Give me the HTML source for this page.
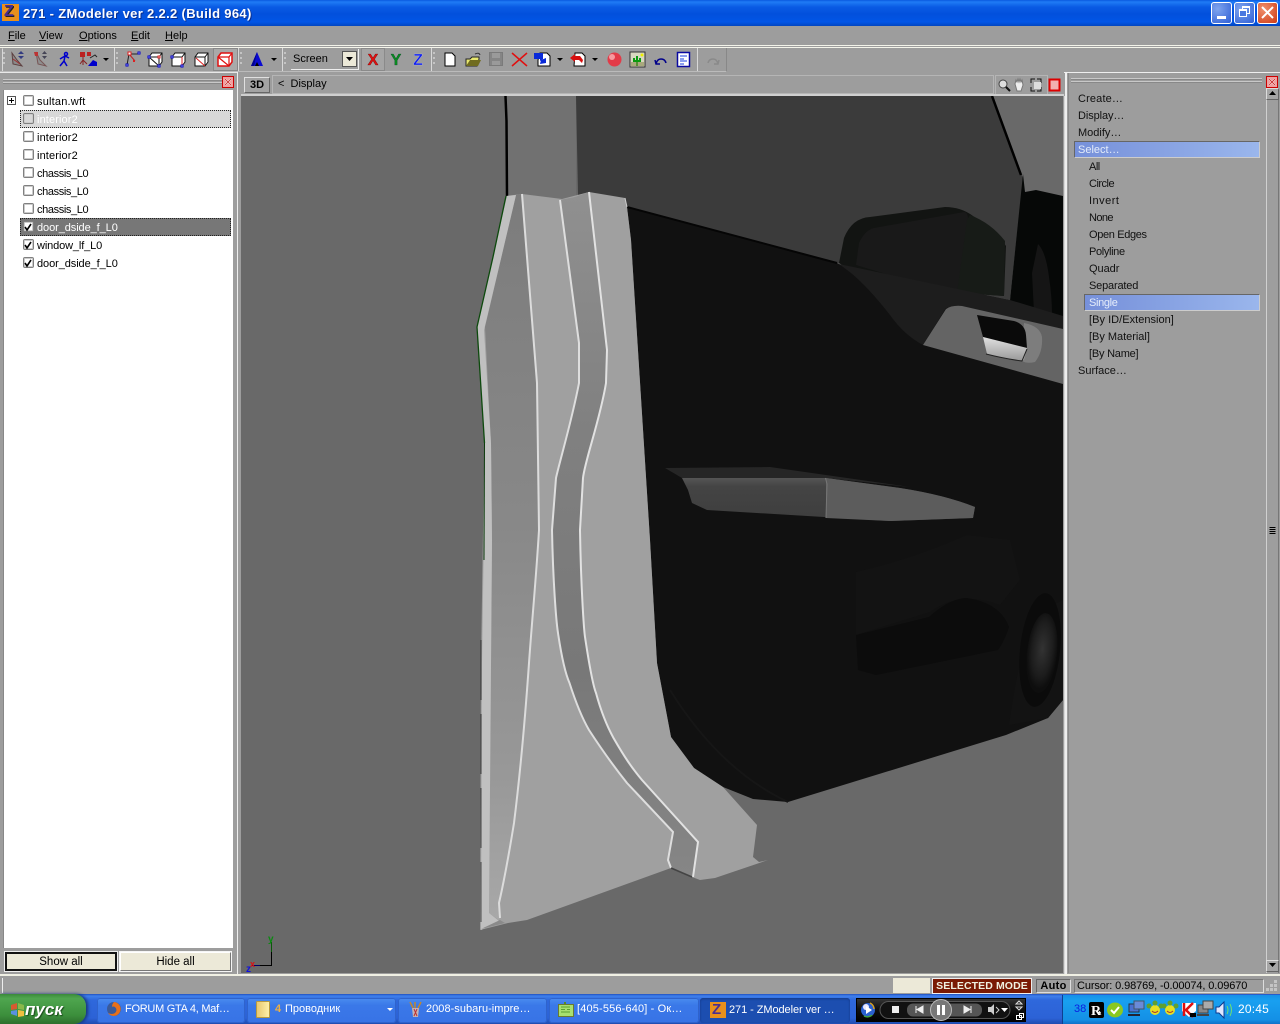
<!DOCTYPE html>
<html><head><meta charset="utf-8"><title>271 - ZModeler ver 2.2.2 (Build 964)</title>
<style>
html,body{margin:0;padding:0;background:#9d9d9d;}
#s{position:relative;width:1280px;height:1024px;overflow:hidden;background:#9d9d9d;font:11px "Liberation Sans","Noto Sans CJK SC",sans-serif;color:#000;}
#s div,#s span.a{position:absolute;}
.t{white-space:nowrap;line-height:13px;}
.row{left:37px;}
.cb{left:23px;width:9px;height:9px;border:1px solid #808080;border-radius:2px;background:#fff;box-shadow:inset 0 0 0 1px #ccc;}
.m{white-space:nowrap;line-height:13px;color:#111;}
.task{top:998px;height:25px;background:linear-gradient(#4a8cf0,#3a78e8 30%,#3873e6);border-radius:3px;color:#fff;line-height:23px;white-space:nowrap;box-shadow:inset 0 0 0 1px #2f63cc;}
u{text-decoration:underline;}
</style></head><body><div id="s">

<!-- title bar -->
<div style="left:0;top:0;width:1280px;height:26px;background:linear-gradient(#0a5ae0 0,#1f7bf5 2px,#0a5be4 7px,#0250dc 14px,#0155e6 22px,#0145c0 26px);"></div>
<div style="left:2px;top:4px;width:17px;height:17px;background:#e8901c;"></div>
<div style="left:4px;top:2px;font:bold 16px 'Liberation Sans',sans-serif;color:#4b2f90;text-shadow:1px 1px 0 #222;line-height:20px;">Z</div>
<div class="t" style="left:23px;top:6px;font:bold 13px 'Liberation Sans',sans-serif;color:#fff;letter-spacing:.33px;line-height:15px;text-shadow:1px 1px 0 #0a2f90;">271 - ZModeler ver 2.2.2 (Build 964)</div>
<div style="left:1211px;top:2px;width:19px;height:20px;border:1px solid #fff;border-radius:3px;background:radial-gradient(circle at 30% 30%,#7ea4ee,#2f5fd6);"></div>
<div style="left:1217px;top:16px;width:9px;height:3px;background:#fff;"></div>
<div style="left:1234px;top:2px;width:19px;height:20px;border:1px solid #fff;border-radius:3px;background:radial-gradient(circle at 30% 30%,#7ea4ee,#2f5fd6);"></div>
<div style="left:1242px;top:6px;width:6px;height:5px;border:1px solid #fff;border-top-width:2px;"></div>
<div style="left:1239px;top:9px;width:6px;height:5px;border:1px solid #fff;border-top-width:2px;background:#4a78e0;"></div>
<div style="left:1257px;top:2px;width:19px;height:20px;border:1px solid #fff;border-radius:3px;background:radial-gradient(circle at 30% 30%,#f0906c,#cf3a14);"></div>
<svg style="position:absolute;left:1257px;top:2px" width="21" height="22"><path d="M5 5L16 16M16 5L5 16" stroke="#fff" stroke-width="2"/></svg>

<!-- menu -->
<div class="t" style="left:8px;top:30px;"><u>F</u>ile</div>
<div class="t" style="left:39px;top:30px;"><u>V</u>iew</div>
<div class="t" style="left:79px;top:30px;"><u>O</u>ptions</div>
<div class="t" style="left:131px;top:30px;"><u>E</u>dit</div>
<div class="t" style="left:165px;top:30px;"><u>H</u>elp</div>
<div style="left:0;top:45px;width:1280px;height:1px;background:#f4f4ea;"></div>
<div style="left:0;top:47px;width:1280px;height:1px;background:#f4f4ea;"></div>

<!-- combo on toolbar -->
<div style="left:291px;top:49px;width:67px;height:20px;background:#9d9d9d;border-bottom:1px solid #eee;border-right:1px solid #eee;"></div>
<div class="t" style="left:293px;top:53px;">Screen</div>
<div style="left:342px;top:51px;width:15px;height:16px;background:#ece9d8;border:1px solid #555;box-sizing:border-box;"></div>

<!-- toolbar and icon layer -->
<svg style="position:absolute;left:0;top:0" width="1280" height="100" viewBox="0 0 1280 100">
<g stroke="#d8d8d8" fill="none">
<path d="M2.500 48.500V71M114.500 48V71M238.500 48V71M282.500 48V71M431.500 48V71M697.500 48V71"/>
<path d="M726.500 48V71" stroke="#888"/>
<path d="M0 71.500H726" stroke="#bbb"/>
</g>
<g fill="#c4c4c4">
<rect x="3" y="52" width="2" height="2"/><rect x="3" y="57" width="2" height="2"/><rect x="3" y="62" width="2" height="2"/>
<rect x="116" y="52" width="2" height="2"/><rect x="116" y="57" width="2" height="2"/><rect x="116" y="62" width="2" height="2"/>
<rect x="240" y="52" width="2" height="2"/><rect x="240" y="57" width="2" height="2"/><rect x="240" y="62" width="2" height="2"/>
<rect x="284" y="52" width="2" height="2"/><rect x="284" y="57" width="2" height="2"/><rect x="284" y="62" width="2" height="2"/>
<rect x="433" y="52" width="2" height="2"/><rect x="433" y="57" width="2" height="2"/><rect x="433" y="62" width="2" height="2"/>
</g>
<rect x="213.500" y="48.500" width="24" height="22" fill="#a9a9a9" stroke="#888"/>
<rect x="361.500" y="48.500" width="23" height="22" fill="#a5a5a5" stroke="#8a8a8a"/>
<path d="M12 53l5 7 5 6-9-2z" fill="#8a8a8a" stroke="#5d4040"/><path d="M13 59l7 5" stroke="#a03030"/><path d="M18 54h6l-3-3zM18 56h6l-3 3z" fill="#333b80"/>
<path d="M36 52l4 8 6 6-8-2z" fill="#8f8f8f" stroke="#755"/><path d="M34 52h4v4h-3z" fill="#b33"/><path d="M42 54h5l-2.500-3zM42 56h5l-2.500 3z" fill="#445"/>
<g stroke="#00c" fill="none" stroke-width="1.500"><circle cx="66" cy="54" r="1.500"/><path d="M65 56l-1 5-4 5M64 61l3 5M60 59l5-3 4 2"/></g>
<g fill="#b22"><rect x="80" y="52" width="5" height="5"/><rect x="87" y="52" width="4" height="4"/></g><path d="M83 57v8M83 60l-3 4M83 60l4 4" stroke="#822" fill="none"/><path d="M88 66l5-6 4 2v4z" fill="#00c"/><path d="M90 58l5-3 2 2" stroke="#222" fill="none"/>
<path d="M103 58h6l-3 3z" fill="#000"/>
<path d="M127 65l2-11h9" stroke="#222" fill="none"/><path d="M129 54l6 7" stroke="#b22"/>
<g fill="#fff" stroke="#00c"><rect x="126" y="64" width="2" height="2"/><rect x="138" y="52" width="2" height="2"/></g><rect x="128" y="52" width="3" height="3" fill="#fff" stroke="#d22"/><rect x="133" y="60" width="2" height="2" fill="#d22"/>
<path d="M149 57l3-4h10v9l-3 4h-10z" fill="#fff" stroke="#111"/><path d="M149 57h10v9M159 57l3-4M149 57l10 9" stroke="#111" fill="none"/>
<g fill="#fff" stroke="#00c"><rect x="148" y="56" width="2" height="2"/><rect x="158" y="65" width="2" height="2"/></g><rect x="158" y="56" width="2" height="2" fill="#fff" stroke="#d22"/>
<path d="M172 57l3-4h10v9l-3 4h-10z" fill="#fff" stroke="#111"/><path d="M172 57h10v9M182 57l3-4" stroke="#111" fill="none"/><path d="M182 57v9" stroke="#d22"/><g fill="#fff" stroke="#00c"><rect x="171" y="56" width="2" height="2"/><rect x="181" y="65" width="2" height="2"/></g>
<path d="M195 57l3-4h10v9l-3 4h-10z" fill="#fff" stroke="#111"/><path d="M195 57h10v9M205 57l3-4" stroke="#111" fill="none"/><path d="M196 58l9 8" stroke="#d22"/>
<path d="M218 57l3-4h11v9l-3 4h-11z" fill="#fff" stroke="#e01010" stroke-width="1.500"/><path d="M218 57h11v9M229 57l3-4M218 57l11 9" stroke="#e01010" fill="none" stroke-width="1.200"/>
<path d="M257 52l6 14h-12z" fill="#0a0ad0"/><path d="M257 52l-3 14h-3z" fill="#000090"/><path d="M257 62l2 4h-4z" fill="#000"/>
<path d="M271 58h6l-3 3z" fill="#000"/>
<path d="M346 57h7l-3.500 4z" fill="#000"/>
<text x="373" y="65" text-anchor="middle" font-family="Liberation Sans" font-weight="bold" font-size="16" fill="#e01010" stroke="#600" stroke-width=".3">X</text>
<text x="396" y="65" text-anchor="middle" font-family="Liberation Sans" font-weight="bold" font-size="16" fill="#0a8a20" stroke="#042" stroke-width=".3">Y</text>
<text x="418" y="65" text-anchor="middle" font-family="Liberation Sans" font-weight="bold" font-size="16" fill="#1020f0" stroke="#ccd" stroke-width=".3">Z</text>
<path d="M445 53h7l3 3v10h-10z" fill="#fff" stroke="#000"/>
<path d="M466 59h4l2-2h7v2l-2 7h-11z" fill="#e8e870" stroke="#222"/><path d="M466 66l4-6h11l-3 6z" fill="#706c20"/><path d="M475 54q4-2 5 1" stroke="#333" fill="none"/>
<rect x="489.500" y="52.500" width="13" height="13" fill="#858585" stroke="#7a7a7a"/><rect x="492" y="53" width="8" height="5" fill="#9a9a9a"/><rect x="492" y="61" width="8" height="4" fill="#9a9a9a"/>
<path d="M512 53l15 13M527 53l-15 13" stroke="#e01010" stroke-width="1.500"/>
<path d="M540 53h7l3 3v10h-12v-6z" fill="#fff" stroke="#000"/><path d="M534 53h9v6l-3 2v-2h-6z" fill="#0a2ad8"/><path d="M541 60l5-2v5l-6 1z" fill="#0a2ad8"/>
<path d="M557 58h6l-3 3z" fill="#000"/>
<path d="M575 53h7l3 3v10h-11z" fill="#fff" stroke="#000"/><path d="M570 58l5-4v2h5l3 4-1 3-3-3h-4v2z" fill="#d80f0f"/>
<path d="M592 58h6l-3 3z" fill="#000"/>
<circle cx="614.500" cy="59.500" r="7" fill="#e23b48"/><circle cx="612" cy="57" r="3" fill="#f79aa0"/>
<rect x="630" y="52" width="15" height="15" fill="#d8d8c0" stroke="#333"/><path d="M637 66v-10M634 58v3h6v-3" stroke="#0a9a10" stroke-width="2" fill="none"/><rect x="631" y="62" width="13" height="4" fill="#8a8a50" opacity=".6"/><circle cx="642" cy="55" r="1.500" fill="#ee0"/>
<path d="M655 60l1 4h4M656 64q1-5 5-5 4 0 5 4" stroke="#00008a" stroke-width="1.500" fill="none"/>
<rect x="677.500" y="52.500" width="12" height="14" fill="#fff" stroke="#0a0aa0" stroke-width="1.500"/><path d="M680 56h7M680 59h4M680 61h7M680 64h4" stroke="#1a40e0"/>
<path d="M719 60l-1 4h-4M718 64q-1-5-5-5-4 0-5 4" stroke="#8a8a8a" stroke-width="1.500" fill="none"/>
<path d="M3 79.500H222M3 82.500H222" stroke="#c8c8c8"/><path d="M3 80.500H222M3 83.500H222" stroke="#888"/>
<rect x="222.500" y="76.500" width="11" height="11" fill="#f0a0a0" stroke="#c00"/><path d="M225 79l6 6M231 79l-6 6" stroke="#fff" stroke-width="1.500"/><path d="M225 79l6 6M231 79l-6 6" stroke="#b00" stroke-width=".7"/>
<path d="M1071 78.500H1262M1071 81.500H1262" stroke="#c8c8c8"/><path d="M1071 79.500H1262M1071 82.500H1262" stroke="#888"/>
<rect x="1266.500" y="76.500" width="11" height="11" fill="#f0a0a0" stroke="#c00"/><path d="M1269 79l6 6M1275 79l-6 6" stroke="#fff" stroke-width="1.500"/><path d="M1269 79l6 6M1275 79l-6 6" stroke="#b00" stroke-width=".7"/>
<circle cx="1003" cy="84" r="4" fill="#ddd" stroke="#444"/><path d="M1006 87l4 4" stroke="#111" stroke-width="2"/>
<path d="M1015 84l1-4 1 2 1-3 1 3 1-3 1 3 1-2 1 5-2 6h-4z" fill="#eee" stroke="#777"/>
<path d="M1031 83v-4h4M1037 79h4v4M1041 87v4h-4M1035 91h-4v-4" stroke="#111" fill="none"/><rect x="1034" y="82" width="7" height="7" fill="#ddd"/>
<rect x="1049.500" y="79.500" width="10" height="11" fill="#f2b0b0" stroke="#d00" stroke-width="2"/>
<rect x="995.500" y="75.500" width="52" height="19" fill="none" stroke="#b5b5b5"/>
</svg>

<!-- left panel -->
<div style="left:237px;top:72px;width:1px;height:903px;background:#eee;"></div>
<div style="left:0;top:72px;width:237px;height:1px;background:#e8e8e8;"></div>
<div style="left:3px;top:90px;width:230px;height:858px;background:#fff;border-left:1px solid #888;box-sizing:border-box;"></div>
<div style="left:7px;top:96px;width:9px;height:9px;border:1px solid #555;box-sizing:border-box;background:#fff;"></div>
<div style="left:9px;top:100px;width:5px;height:1px;background:#000;"></div>
<div style="left:11px;top:98px;width:1px;height:5px;background:#000;"></div>
<div style="left:20px;top:110px;width:209px;height:16px;background:#d8d8d8;border:1px dotted #222;"></div>
<div style="left:20px;top:218px;width:209px;height:16px;background:#777;border:1px dotted #222;"></div>
<div class="cb" style="top:95px"></div><div class="t row" style="top:95px;letter-spacing:.2px;top:96px">sultan.wft</div>
<div class="cb" style="top:113px;background:#d8d8d8"></div><div class="t row" style="top:114px;color:#fff;letter-spacing:.12px">interior2</div>
<div class="cb" style="top:131px"></div><div class="t row" style="top:132px;letter-spacing:.12px">interior2</div>
<div class="cb" style="top:149px"></div><div class="t row" style="top:150px;letter-spacing:.12px">interior2</div>
<div class="cb" style="top:167px"></div><div class="t row" style="top:168px;letter-spacing:-.38px">chassis_L0</div>
<div class="cb" style="top:185px"></div><div class="t row" style="top:186px;letter-spacing:-.38px">chassis_L0</div>
<div class="cb" style="top:203px"></div><div class="t row" style="top:204px;letter-spacing:-.38px">chassis_L0</div>
<div class="cb" style="top:221px"></div><div class="t row" style="top:222px;color:#fff;letter-spacing:-.08px">door_dside_f_L0</div>
<div class="cb" style="top:239px"></div><div class="t row" style="top:240px;letter-spacing:-.13px">window_lf_L0</div>
<div class="cb" style="top:257px"></div><div class="t row" style="top:258px;letter-spacing:-.08px">door_dside_f_L0</div>
<svg style="position:absolute;left:0;top:0" width="40" height="280"><g stroke="#000" stroke-width="1.600" fill="none"><path d="M25 227l2 3 4-6M25 245l2 3 4-6M25 263l2 3 4-6"/></g></svg>
<div style="left:5px;top:952px;width:112px;height:19px;box-sizing:border-box;background:#ece9d8;border:2px solid #111;text-align:center;line-height:16px;font-size:11.500px;box-shadow:0 0 0 1px #eee;">Show all</div>
<div style="left:120px;top:952px;width:111px;height:19px;box-sizing:border-box;background:#ece9d8;border:1px solid #fff;border-right-color:#777;border-bottom-color:#777;text-align:center;line-height:18px;font-size:11.500px;box-shadow:0 0 0 1px #f5f5f5;">Hide all</div>

<!-- viewport header -->
<div style="left:244px;top:77px;width:26px;height:16px;box-sizing:border-box;background:#a3a3a3;border:1px solid #e0e0e0;border-right-color:#666;border-bottom-color:#666;font:bold 11px 'Liberation Sans',sans-serif;text-align:center;line-height:14px;">3D</div>
<div style="left:272px;top:75px;width:722px;height:19px;box-sizing:border-box;border:1px solid #b5b5b5;"></div>
<div class="t" style="left:278px;top:78px;">&lt;&nbsp;&nbsp;Display</div>
<div style="left:241px;top:94px;width:823px;height:2px;background:#cfcfcf;"></div>

<!-- 3D viewport -->
<svg style="position:absolute;left:241px;top:96px" width="822" height="877" viewBox="241 96 822 877">
<defs>
<linearGradient id="band" x1="0" y1="0" x2="0" y2="1"><stop offset="0" stop-color="#7c7c7c"/><stop offset=".45" stop-color="#888"/><stop offset=".8" stop-color="#989898"/><stop offset="1" stop-color="#a8a8a8"/></linearGradient>
<linearGradient id="gr" x1="0" y1="0" x2="0" y2="1"><stop offset="0" stop-color="#909090"/><stop offset=".35" stop-color="#808080"/><stop offset=".7" stop-color="#787878"/><stop offset="1" stop-color="#868686"/></linearGradient>
<linearGradient id="arm" x1="0" y1="0" x2="0" y2="1"><stop offset="0" stop-color="#555"/><stop offset=".2" stop-color="#444"/><stop offset="1" stop-color="#3e3e3e"/></linearGradient>
<linearGradient id="lip" x1="0" y1="0" x2="0" y2="1"><stop offset="0" stop-color="#e0e0e0"/><stop offset="1" stop-color="#9a9a9a"/></linearGradient>
<radialGradient id="spk" cx=".5" cy=".45" r=".5"><stop offset="0" stop-color="#333"/><stop offset=".7" stop-color="#1c1c1c"/><stop offset="1" stop-color="#0e0e0e"/></radialGradient>
</defs>
<rect x="241" y="96" width="822" height="877" fill="#696969"/>
<path d="M506 96H576V200L506 200z" fill="#717171"/>
<path d="M576 96H992L1023 178 1010 300 837 263 627 207 578 195z" fill="#3b3b3b"/>
<path d="M992 96L1021 175" stroke="#000" stroke-width="2.500"/>
<path d="M505.500 96l1 25 .5 75" stroke="#000" stroke-width="2.500" fill="none"/>
<path d="M1023 174l2 18 11-2 27 6V325L1009 310z" fill="#060807"/>
<path d="M1038 244q8 8 11 33 3 20 3 37l-10 2-8-3-2-40z" fill="#151515"/>
<path d="M839 263l5-25q8-20 26-21l75-10q16 0 28 9 24 16 33 30l-2 50-50-4L853 272z" fill="#121412"/>
<path d="M856 265l3-22q6-13 15-15l90-16q4 0 4 8l-9 76z" fill="#191919"/>
<path d="M967 220l-10 73 47 3 1-55q-14-18-35-26z" fill="#171b17"/>
<path d="M627 207L837 263 853 272 1063 325V700L1048 718 1006 735 788 802 753 799 723 787 694 768 671 737 657 663 650 540 631 240z" fill="#111"/>
<path d="M627 207L837 263" stroke="#050505" stroke-width="2"/>
<path d="M839 264L1010 300 1063 316V330L960 306 946 308 923 345Q904 335 890 315 868 287 851 273z" fill="#1d1d1d"/>
<path d="M923 345L946 309Q952 305 962 306L1063 329V384z" fill="#646464"/>
<path d="M1024 323q16 3 18 14 1 15-7 25-8 2-13-1z" fill="#7d7d7d"/>
<path d="M977 315L1014 321Q1025 324 1026 335L1027 348 983 337z" fill="#0a0a0a"/>
<path d="M983 337L1027 348 1024 360Q1014 362 987 354z" fill="url(#lip)"/>
<path d="M986 354q20 5 36 7l5-12" stroke="#222" fill="none"/>
<!-- armrest -->
<path d="M665 468L770 467 910 487 826 478H682z" fill="#262626"/>
<path d="M682 478H826L900 488Q945 495 975 507L973 518 891 521 707 510 692 503 688 490z" fill="url(#arm)"/>
<path d="M826 478L900 488Q945 495 975 507L973 518 891 521 826 518z" fill="#5c5c5c"/>
<path d="M825.500 478l1.500 6-1 34" stroke="#777" fill="none"/>
<!-- lower door -->
<path d="M856 572Q910 560 967 535L1010 540 1020 580 1000 605Q960 590 930 612L856 635z" fill="#131313"/>
<path d="M856 635L929 617Q950 598 967 598 1000 603 1009 627 1005 640 998 650L876 675 858 670z" fill="#0c0c0c"/>
<path d="M1009 725Q1018 660 1033 615L1063 600V700L1048 718z" fill="#131313"/>
<ellipse cx="1040" cy="650" rx="20" ry="57" transform="rotate(6 1040 650)" fill="#0b0b0b"/>
<ellipse cx="1042" cy="653" rx="15" ry="40" transform="rotate(6 1042 653)" fill="url(#spk)"/>
<path d="M670 690Q720 770 788 802" stroke="#161616" stroke-width="2" fill="none"/>
<!-- sill strip -->
<path d="M506 196L522 194 562 199 589 192 625 198 627 207 631 240 650 540 657 663 671 737 694 768 723 787 757 825 753 857 759 862 768 860 715 878 700 880 692 877 671 868 527 920 508 923 480 930 481 663 483 530 484.500 443 480 373 477 327 493 257z" fill="#a0a0a0"/>
<path d="M516 195L485 327 491 443 492 540 489 913 499 920 500 915 499 903C502 890 508 860 514 823 520 775 525 720 529 663 532 620 536 580 539 530L537 383 522 194z" fill="url(#band)"/>
<path d="M507 196L516 195 490 305 484 330 491 443 492 540 489 913 499 921 481 930 482 663 484 530 485 443 480 373 477 327 493 257z" fill="#c0c0c0"/>
<path d="M506 196L493 257 477 327 480 373 484.500 443" stroke="#0d4a0d" stroke-width="1.300" fill="none"/>
<path d="M484.500 443L484 560" stroke="#0d3a0d" fill="none"/>
<path d="M481 640V930" stroke="#1a1a1a" stroke-dasharray="60 14" stroke-width=".7" fill="none"/>
<path d="M481 929L500 920 505 923z" fill="#8a8a8a"/>
<path d="M522 194L537 383 539 530C536 580 532 620 529 663 525 720 520 775 514 823 508 860 502 890 499 903L500 918" stroke="#dcdcdc" stroke-width="2" fill="none"/>
<!-- groove -->
<path d="M560 200L579 343 579 383C572 420 560 460 556 478L552 530C553 580 556 620 558 633 562 660 566 675 569.500 683 575 700 582 718 589 730 602 750 615 768 627 783L673 832 668 860 671 868 693 877 698 842 642 780C632 768 625 758 613.500 738 608 728 602 715 596 693 594 688 590 670 585 637 584 630 581 590 580 530L583 478C585 460 600 420 606 383L607 350 589 192 575 197z" fill="url(#gr)"/>
<path d="M560 200L579 343 579 383C572 420 560 460 556 478L552 530C553 580 556 620 558 633 562 660 566 675 569.500 683 575 700 582 718 589 730 602 750 615 768 627 783L673 832 668 860 671 868" stroke="#dedede" stroke-width="2" fill="none"/>
<path d="M589 192L607 350 606 383C600 420 585 460 583 478L580 530C581 590 584 630 585 637 590 670 594 688 596 693 602 715 608 728 613.500 738 625 758 632 768 642 780L698 842 693 877" stroke="#e2e2e2" stroke-width="2" fill="none"/>
<path d="M671 868L692 877" stroke="#444" stroke-width="1.500"/>
<path d="M625 198L627 207" stroke="#ccc"/>
<!-- axes -->
<path d="M271.500 942V965.500H252" stroke="#000" fill="none"/>
<path d="M271.500 942V952" stroke="#0a5a0a" fill="none"/>
<path d="M252 965.500h8" stroke="#000066"/>
<text x="268" y="942" font-family="Liberation Sans" font-weight="bold" font-size="10" fill="#0a8a10">y</text>
<text x="250" y="967" font-family="Liberation Sans" font-weight="bold" font-size="9" fill="#e01010">x</text>
<text x="246" y="972" font-family="Liberation Sans" font-weight="bold" font-size="10" fill="#1010e0">z</text>
</svg>

<!-- right side -->
<div style="left:1064px;top:96px;width:1px;height:878px;background:#d8d8d8;"></div>
<div style="left:1064px;top:72px;width:216px;height:1px;background:#eee;"></div>
<div style="left:1065px;top:73px;width:2px;height:902px;background:#eee;"></div>
<div style="left:1068px;top:73px;width:1px;height:900px;background:#888;"></div>
<div style="left:1266px;top:89px;width:13px;height:884px;box-sizing:border-box;border-left:1px solid #d0d0d0;border-right:1px solid #777;background:#9e9e9e;"></div>
<div style="left:1266px;top:88px;width:13px;height:12px;box-sizing:border-box;background:#a6a6a6;border:1px solid #ddd;border-right-color:#666;border-bottom-color:#666;"></div>
<div style="left:1266px;top:960px;width:13px;height:12px;box-sizing:border-box;background:#a6a6a6;border:1px solid #ddd;border-right-color:#666;border-bottom-color:#666;"></div>
<svg style="position:absolute;left:1266px;top:88px" width="14" height="890"><path d="M3 7h7l-3.500-4zM3 875h7l-3.500 4z" fill="#000"/><path d="M3.500 439.500h6M3.500 441.500h6M3.500 443.500h6M3.500 445.500h6" stroke="#000"/></svg>

<div style="left:1074px;top:141px;width:186px;height:17px;box-sizing:border-box;background:linear-gradient(90deg,#7690da,#9ab6ec);border-top:1px solid #666;border-left:1px solid #666;border-right:1px solid #ccc;border-bottom:1px solid #ccc;"></div>
<div style="left:1084px;top:294px;width:176px;height:17px;box-sizing:border-box;background:linear-gradient(90deg,#7690da,#9ab6ec);border-top:1px solid #666;border-left:1px solid #666;border-right:1px solid #ccc;border-bottom:1px solid #ccc;"></div>
<div class="m" style="left:1078px;top:93px;letter-spacing:.15px">Create…</div>
<div class="m" style="left:1078px;top:110px;letter-spacing:-.1px">Display…</div>
<div class="m" style="left:1078px;top:127px">Modify…</div>
<div class="m" style="left:1078px;top:144px;color:#e4ecfa">Select…</div>
<div class="m" style="left:1089px;top:161px;letter-spacing:-.5px">All</div>
<div class="m" style="left:1089px;top:178px;letter-spacing:-.5px">Circle</div>
<div class="m" style="left:1089px;top:195px;letter-spacing:.48px">Invert</div>
<div class="m" style="left:1089px;top:212px;letter-spacing:-.6px">None</div>
<div class="m" style="left:1089px;top:229px;letter-spacing:-.35px">Open Edges</div>
<div class="m" style="left:1089px;top:246px;letter-spacing:-.35px">Polyline</div>
<div class="m" style="left:1089px;top:263px;letter-spacing:-.05px">Quadr</div>
<div class="m" style="left:1089px;top:280px;letter-spacing:-.18px">Separated</div>
<div class="m" style="left:1089px;top:297px;color:#e4ecfa;letter-spacing:-.35px">Single</div>
<div class="m" style="left:1089px;top:314px;letter-spacing:.03px">[By ID/Extension]</div>
<div class="m" style="left:1089px;top:331px;letter-spacing:-.02px">[By Material]</div>
<div class="m" style="left:1089px;top:348px;letter-spacing:-.22px">[By Name]</div>
<div class="m" style="left:1078px;top:365px">Surface…</div>

<!-- status bar -->
<div style="left:0;top:974px;width:1280px;height:2px;background:#f0f0e4;"></div>
<div style="left:0;top:976px;width:1280px;height:18px;background:#9d9d9d;"></div>
<div style="left:2px;top:978px;width:1px;height:15px;background:#eee;"></div>
<div style="left:893px;top:978px;width:37px;height:15px;background:#ece9d8;"></div>
<div style="left:932px;top:978px;width:100px;height:16px;box-sizing:border-box;background:#7a1a04;border:1px solid #eee;color:#f0f0e0;font:bold 10.500px 'Liberation Sans',sans-serif;text-align:center;line-height:14px;white-space:nowrap;letter-spacing:.1px;">SELECTED MODE</div>
<div style="left:1036px;top:979px;width:35px;height:14px;box-sizing:border-box;border:1px solid #666;border-right-color:#ddd;border-bottom-color:#ddd;font:bold 11px 'Liberation Sans',sans-serif;text-align:center;line-height:12px;letter-spacing:.3px;">Auto</div>
<div style="left:1074px;top:979px;width:190px;height:14px;box-sizing:border-box;border:1px solid #777;border-right-color:#ddd;border-bottom-color:#ddd;"></div>
<div class="t" style="left:1077px;top:980px;letter-spacing:-.12px;">Cursor: 0.98769, -0.00074, 0.09670</div>
<svg style="position:absolute;left:1264px;top:978px" width="16" height="16"><g fill="#c4c4c4"><rect x="10" y="2" width="3" height="3"/><rect x="6" y="6" width="3" height="3"/><rect x="10" y="6" width="3" height="3"/><rect x="2" y="10" width="3" height="3"/><rect x="6" y="10" width="3" height="3"/><rect x="10" y="10" width="3" height="3"/></g></svg>

<!-- taskbar -->
<div style="left:0;top:994px;width:1280px;height:30px;background:linear-gradient(#2050c0 0,#3f80ec 2px,#2f68dc 6px,#2c62d6 24px,#1f4cb0 30px);"></div>
<div style="left:0;top:994px;width:86px;height:30px;background:linear-gradient(#3a8a3a,#4fa64f 15%,#3c8f3c 70%,#2d6f2d);border-radius:0 12px 12px 0;box-shadow:2px 0 3px #16357a;"></div>
<svg style="position:absolute;left:10px;top:1001px" width="16" height="17"><path d="M1 4l6-2v6l-6 1z" fill="#d65a30"/><path d="M8 2l6 2v5l-6-1z" fill="#8ab84a"/><path d="M1 10l6-1v6l-6-2z" fill="#5a90e0"/><path d="M8 9l6 1v5l-6 1z" fill="#f0c040"/></svg>
<div style="left:25px;top:1000px;font:italic bold 17px 'Liberation Sans','Noto Sans CJK SC',sans-serif;color:#fff;line-height:19px;text-shadow:1px 1px 1px #1a4a1a;">пуск</div>

<div class="task" style="left:97px;width:148px;"><span style="position:absolute;left:28px;letter-spacing:-.27px">FORUM GTA 4, Maf…</span></div>
<svg style="position:absolute;left:106px;top:1001px" width="16" height="17"><circle cx="8" cy="8" r="7" fill="#3a5a9a"/><path d="M8 1a7 7 0 0 1 6 10 7 7 0 0 1-12 1q4 2 7 0 3-3 0-6-2-1-3 0 0-3 2-5z" fill="#e8701a"/></svg>

<div class="task" style="left:247px;width:149px;"><span style="position:absolute;left:28px"><b style="color:#f0b040">4</b></span><span style="position:absolute;left:38px;">Проводник</span></div>
<div style="left:256px;top:1001px;width:12px;height:15px;background:linear-gradient(90deg,#e8c870,#fff0a8);border:1px solid #b89a40;border-radius:1px;"></div>
<svg style="position:absolute;left:386px;top:1007px" width="8" height="6"><path d="M1 1h6l-3 3z" fill="#fff"/></svg>

<div class="task" style="left:398px;width:149px;"><span style="position:absolute;left:28px;letter-spacing:.03px">2008-subaru-impre…</span></div>
<svg style="position:absolute;left:408px;top:1001px" width="14" height="17"><path d="M4 7h7l-1 9H5z" fill="#c4b4b4"/><path d="M6 8l3 7M9 8l-3 7" stroke="#b33"/><path d="M5 7L2 1M7 7V1M10 7l3-6" stroke="#c08830" stroke-width="1.500"/></svg>

<div class="task" style="left:549px;width:150px;"><span style="position:absolute;left:28px;letter-spacing:.15px">[405-556-640] - Ок…</span></div>
<div style="left:558px;top:1004px;width:14px;height:11px;background:#a8e070;border:1px solid #6a7a30;"></div>
<div style="left:564px;top:1002px;width:2px;height:2px;background:#5a8a20;"></div>
<svg style="position:absolute;left:560px;top:1006px" width="12" height="8"><path d="M1 1h9M1 3.500h4M7 3.500h3M1 6h9" stroke="#5aa030"/></svg>

<div class="task" style="left:700px;width:150px;background:#1c4eb0;box-shadow:inset 0 1px 2px #143a88;"><span style="position:absolute;left:29px;top:1px;letter-spacing:-.07px">271 - ZModeler ver …</span></div>
<div style="left:710px;top:1002px;width:16px;height:16px;background:#e8901c;"></div>
<div style="left:712px;top:1001px;font:bold 15px 'Liberation Sans',sans-serif;color:#4b2f90;line-height:18px;">Z</div>

<!-- media player -->
<div style="left:856px;top:998px;width:170px;height:24px;background:linear-gradient(#333,#111 45%,#000);border:1px solid #000;box-sizing:border-box;"></div>
<svg style="position:absolute;left:856px;top:998px" width="172" height="24">
<circle cx="12" cy="12" r="7" fill="#2a60d0"/><circle cx="10" cy="9" r="3" fill="#e8e8ff"/><path d="M10 8l6 4-6 4z" fill="#fff"/><path d="M14 5a7 7 0 0 1 4 6" stroke="#d8a020" stroke-width="1.500" fill="none"/><path d="M8 18a7 7 0 0 0 8-1" stroke="#40a040" stroke-width="1.500" fill="none"/>
<rect x="24" y="3.500" width="130" height="17" rx="8.500" fill="#111" stroke="#555"/>
<rect x="36" y="8" width="7" height="7" fill="#eee"/>
<rect x="51" y="5.500" width="75" height="13" rx="6" fill="#555"/>
<path d="M60 8v7M67 8l-6 3.500 6 3.500z" fill="#eee" stroke="#eee"/>
<path d="M108 8l6 3.500-6 3.500zM115 8v7" fill="#eee" stroke="#eee"/>
<circle cx="85" cy="12" r="10.500" fill="#777" stroke="#bbb"/><rect x="81" y="7" width="3" height="10" fill="#fff"/><rect x="86" y="7" width="3" height="10" fill="#fff"/>
<path d="M132 9h3l3-3v11l-3-3h-3z" fill="#ccc"/><path d="M140 9l3 3-3 3" stroke="#ccc" fill="none"/>
<path d="M145 10h7l-3.500 4z" fill="#fff"/>
<path d="M160 6l3-3 3 3zM160 9l3 3 3-3z" fill="none" stroke="#ddd"/>
<rect x="160.500" y="17.500" width="5" height="4" fill="none" stroke="#fff"/><rect x="163.500" y="15.500" width="4" height="4" fill="none" stroke="#fff"/>
</svg>

<!-- tray -->
<div style="left:1062px;top:995px;width:218px;height:29px;background:linear-gradient(#1590e8,#18a0f0 20%,#1490e6 85%,#1070c8);border-left:1px solid #0f3f90;box-sizing:border-box;"></div>
<div class="t" style="left:1074px;top:1003px;color:#0a20e0;">38</div>
<svg style="position:absolute;left:1088px;top:998px" width="160" height="24">
<rect x="1" y="4" width="15" height="16" rx="2" fill="#000"/><text x="3" y="17" font-family="Liberation Serif" font-weight="bold" font-size="14" fill="#fff">R</text><text x="10" y="19" font-family="Liberation Sans" font-weight="bold" font-size="8" fill="#fff">*</text>
<ellipse cx="27" cy="12" rx="8" ry="7.500" fill="#8ac820"/><path d="M23 12l3 3 5-6" stroke="#fff" stroke-width="2" fill="none"/>
<rect x="41" y="6" width="10" height="8" fill="#4a70d0" stroke="#234"/><rect x="46" y="3" width="10" height="8" fill="#6a8ad8" stroke="#456"/><path d="M40 17h12" stroke="#223" stroke-width="2"/>
<circle cx="67" cy="12" r="5" fill="#e8e020"/><g fill="#60a030"><circle cx="61" cy="8" r="2.500"/><circle cx="73" cy="8" r="2.500"/><circle cx="67" cy="5" r="2.500"/></g><path d="M64 13q3 3 6 0" stroke="#a33" fill="none"/>
<circle cx="82" cy="12" r="5" fill="#e8e020"/><g fill="#60a030"><circle cx="76" cy="8" r="2.500"/><circle cx="88" cy="8" r="2.500"/><circle cx="82" cy="5" r="2.500"/></g><path d="M79 13q3 3 6 0" stroke="#a33" fill="none"/>
<path d="M94 5h14v8l-7 6-7-6z" fill="#fff"/><path d="M96 5v13M105 5l-7 7 7 7" stroke="#e01010" stroke-width="2.500" fill="none"/><rect x="102" y="15" width="6" height="4" fill="#000"/>
<rect x="110" y="7" width="10" height="8" fill="#888" stroke="#444"/><rect x="115" y="3" width="10" height="8" fill="#aaa" stroke="#444"/><path d="M109 17h12" stroke="#444" stroke-width="2"/>
<path d="M128 9h3l5-5v16l-5-5h-3z" fill="#e0e8ff" stroke="#0a3a90"/><path d="M139 8q2 4 0 8M142 6q3 6 0 12" stroke="#70e070" fill="none"/>
</svg>
<div class="t" style="left:1238px;top:1003px;color:#fff;font-size:12px;letter-spacing:.2px;">20:45</div>

</div></body></html>
